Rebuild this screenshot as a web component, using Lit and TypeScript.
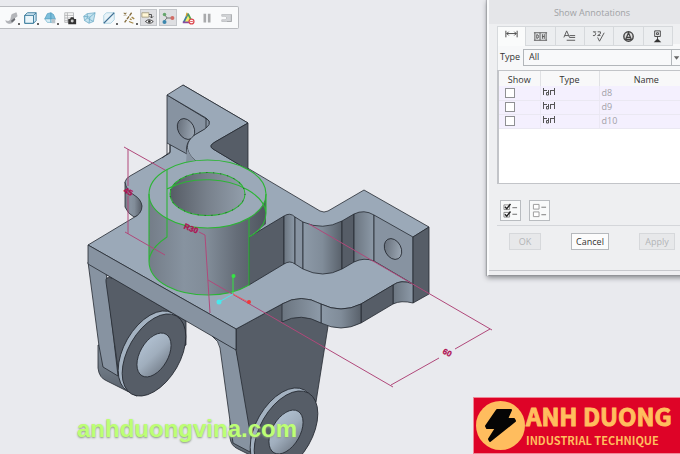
import { LitElement, html, css, svg } from "lit";
import { customElement, property, state } from "lit/decorators.js";
import { classMap } from "lit/directives/class-map.js";

const toolIcons = [
  { name: "Shading", more: true, art: svg`<path d="M2 11c3 2 6 0 6-3l1-4 5-2 1 4-3 2c0 5-5 8-9 5z" fill="#b4b6ba" stroke="#a6a8ac" stroke-width=".7"/><path d="M8 11l4-3 1 2-4 3z" fill="#696b70"/>` },
  { name: "Display style", more: true, art: svg`<path d="M2 5l3-3h10v9l-3 3H2z" fill="#cfe6f2" stroke="#2e7396"/><path d="M2 5h10v9H2zM12 5l3-3" fill="#eaf5fa" stroke="#2e7396"/>` },
  { name: "Saved orientations", more: true, art: svg`<path d="M2 9l3-6 4-1 3 2 2 5z" fill="#7dbedb" stroke="#4c9bbd" stroke-width=".8"/><path d="M2 9h12l-2 4H5z" fill="#d9eef6" stroke="#6fb2cd" stroke-width=".8"/><path d="M9 2v11" stroke="#4c9bbd"/><path d="M10 9h4v5h-4z" fill="#b9c3c9"/>` },
  { name: "View manager", more: false, art: svg`<path d="M2 2h10v11H2zM2 5h10M2 8h10M2 11h6M5 2v11" fill="#fafafa" stroke="#a3a5a8" stroke-width=".8"/><path d="M6 9h2l1-2h3l1 2h2v6H6z" fill="#333"/><circle cx="10.500" cy="11.500" r="1.700" fill="#ccc"/>` },
  { name: "Perspective", more: false, art: svg`<path d="M2 6l4-3 9-1-2 10-5 2-5-3z" fill="#c5e3ef" stroke="#64a6c3" stroke-width=".8"/><path d="M2 6l7 1 6-5M9 7l-1 7M6 3v5l7 4M6 8l-3 3" fill="none" stroke="#64a6c3" stroke-width=".8"/>` },
  { name: "Sections", more: true, art: svg`<path d="M2 5l3-3h9v8l-4 4H2z" fill="#e8f3f8" stroke="#a9d0e0"/><path d="M2 14L14 2" stroke="#3f6f94" stroke-width="1.300"/>` },
  { name: "Datum display", more: true, art: svg`<path d="M2 2l3 3M5 2L2 5" stroke="#826a39" stroke-width="1.200"/><path d="M11 2L3 13" stroke="#826a39" stroke-width="1.500" stroke-dasharray="4 1"/><path d="M9 9l2 1M8 12l5 2M11 7l3 2" stroke="#a38746" stroke-width="1.500"/>` },
  { name: "Annotation display", on: true, more: false, art: svg`<path d="M1 2h8v5H1z" fill="#fff6d5" stroke="#a59d80"/><path d="M9 4h3v4M10 6l2 2 2-2" fill="none" stroke="#444"/><path d="M5 12q4-4 9 0q-4 4-9 0z" fill="#fff" stroke="#333"/><circle cx="9.500" cy="12" r="1.500" fill="#333"/>` },
  { name: "Spin center", on: true, more: false, art: svg`<path d="M4 4l3 4h7M7 8l-4 4" fill="none" stroke="#666"/><circle cx="4" cy="4" r="2" fill="#66a66d"/><circle cx="13" cy="8" r="2.300" fill="#d16c65"/><circle cx="4" cy="12.500" r="2.300" fill="#3b86ad"/>` },
  { name: "Simulation", more: false, art: svg`<path d="M8 3l5 10H3z" fill="#f4ef68"/><path d="M8 3l5 10" stroke="#4fa548" stroke-width="2"/><path d="M8 3L3 13" stroke="#3f7f9c" stroke-width="2"/><path d="M7 2L6 6" stroke="#d7a32e" stroke-width="1.500"/><path d="M2 13h8" stroke="#8a4aa0" stroke-width="2"/><circle cx="12" cy="12" r="2.800" fill="#fff" stroke="#dd4d54" stroke-width="1.500"/><path d="M10.500 12h3" stroke="#dd4d54"/>` },
  { name: "Pause", more: false, art: svg`<path d="M4 3h3v10H4zM9 3h3v10H9z" fill="#a9aaac"/>` },
  { name: "Exit", more: false, art: svg`<path d="M2 4h11v8H2v-2h4l2-2-2-2H2z" fill="#d2d4d7" stroke="#bfc1c4"/><path d="M13 4v8H8" stroke="#a5a7aa" fill="none"/>` },
];

const tabIcons = [
  { name: "Dimensions", art: svg`<path d="M2 4v7M14 4v7M3 7h10M5 5L3 7l2 2M11 5l2 2-2 2" fill="none" stroke="#444"/>` },
  { name: "Geometric tolerances", art: svg`<path d="M1 4h14M1 12h14M2 4v8M14 4v8M7.500 4v8M10 5.500v5M12 5.500v5M10 8h2M4 6q2 0 2 2t-2 2z" fill="none" stroke="#555"/>` },
  { name: "Notes", art: svg`<path d="M2 9L5 2l3 7M3 7h4M8 7h6M8 9h6M5 12h9" fill="none" stroke="#555"/>` },
  { name: "Surface finish", art: svg`<path d="M1 3h3L3 4l1 1-1 2H1M6 3h3v2L6 7h3M6 9l2 4 5-9" fill="none" stroke="#555"/>` },
  { name: "Symbols", art: svg`<circle cx="8" cy="8" r="5" fill="#ddd" stroke="#444" stroke-width="1.500"/><path d="M5 11l3-7 3 7zM6 9h4" fill="none" stroke="#444" stroke-width="1.300"/>` },
  { name: "Datums", art: svg`<path d="M5 2h6v6H5zM8 8v4M7 4h2v2H7z" fill="none" stroke="#444"/><path d="M4 14l4-4 4 4z" fill="#333"/>` },
];

@customElement("tool-bar")
export class ToolBar extends LitElement {
  static styles = css`
    :host { display: block; }
    .bar { display: grid; grid-template-columns: repeat(12, 1fr); box-sizing: border-box; height: 23px; padding: 2px 1px; background: #f9fafb; border: 1px solid #b9bbbf; border-left: 0; border-radius: 0 2px 2px 0; }
    .tool { position: relative; display: flex; align-items: center; justify-content: center; margin: 0 1px; padding: 0; background: none; border: 1px solid transparent; }
    .on { background: #dedfe2; border-color: #c3c6ca; }
    .art { width: 14px; height: 14px; flex: none; }
    .more { position: absolute; right: -1px; bottom: 0; border: 1px solid #666; }
  `;
  render() {
    return html`<div class="bar" role="toolbar" aria-label="Graphics">${toolIcons.map(
      (t) => html`<button class=${classMap({ tool: true, on: !!t.on })} aria-label=${t.name}>
        <svg class="art" viewBox="0 0 16 16" aria-hidden="true">${t.art}</svg>${t.more ? html`<span class="more"></span>` : ""}
      </button>`
    )}</div>`;
  }
}

@customElement("annotation-dialog")
export class AnnotationDialog extends LitElement {
  @property({ attribute: false }) rows = ["d8", "d9", "d10"];
  @state() tab = 0;

  static styles = css`
    :host { display: block; font: 9px/12px "Open Sans", "Noto Sans", sans-serif; color: #333; }
    * { box-sizing: border-box; }
    .frame { background: #eeeff1; border: 1px solid #b8babe; border-left: 2px solid #fafbfc; border-top: 0; border-bottom-color: #929498; box-shadow: 0 2px 5px #8c8e92, -1px 0 1px #b5b7bb; padding-bottom: 4px; }
    .inside { border-bottom: 1px solid #c6c8cc; padding-bottom: 20px; }
    .title { margin: 0; height: 24px; padding-top: 7px; font-size: 9px; line-height: 12px; font-weight: 400; text-align: center; color: #a0a2a5; background: #e5e6e9; }
    .body { padding: 2px 8px 0; }
    .tabs { display: grid; grid-template-columns: repeat(6, 1fr); height: 18px; padding-right: 14px; }
    .tab { display: flex; justify-content: center; align-items: center; background: #eceef0; border: 1px solid #d6d9dc; border-left: 0; padding: 0; }
    .tab.on { height: 20px; padding-bottom: 4px; background: #fafbfb; border-left: 1px solid #d6d9dc; border-bottom: 0; }
    .art { width: 15px; height: 15px; flex: none; }
    .filter { display: flex; align-items: center; gap: 3px; height: 26px; padding: 0 4px 0 2px; background: #f7f8f9; border-left: 1px solid #d6d9dc; }
    .pick { position: relative; flex: 1; }
    .select { appearance: none; width: 100%; height: 17px; padding: 0 5px; border: 1px solid #b2b6ba; border-radius: 0; background: #f8f9fa; font: inherit; color: #333; display: block; }
    .arrow { position: absolute; right: 0; top: 0; width: 12px; height: 17px; border-left: 1px solid #b2b6ba; pointer-events: none; }
    .list { height: 114px; border: 1px solid #c2c4c8; border-left-width: 2px; background: #fff; }
    .table { width: 100%; border-collapse: collapse; table-layout: fixed; }
    .table th { height: 15px; padding: 2px 0 0; line-height: 12px; font-weight: 400; background: #f8f8f9; border-right: 1px solid #e0e1e4; }
    .table td { height: 14px; padding: 0; line-height: 12px; background: #f4f0fe; border-bottom: 1px solid #eae8f2; border-right: 1px solid #ebe8f4; }
    .c1 { width: 41px; }
    .c2 { width: 59px; }
    .table td.name { padding-left: 2px; color: #a2a1a8; }
    .table th.name { padding-left: 8px; }
    .box { appearance: none; display: block; width: 10px; height: 10px; margin: 0 0 0 6px; border: 1px solid #8f9093; background: #fff; }
    .box:checked { background: #777; }
    .dim { display: block; width: 14px; height: 12px; margin-left: 1px; }
    .picks { display: flex; gap: 8px; padding: 16px 0 4px 3px; }
    .mark { width: 21px; height: 21px; padding: 0; border: 1px solid #b9bcc0; background: #f9fafa; display: flex; align-items: center; justify-content: center; }
    .actions { display: flex; justify-content: space-between; border-top: 1px solid #d4d6da; padding: 7px 12px 0; }
    .act { height: 17px; padding: 0; font: inherit; line-height: 12px; color: #333; background: #fcfcfc; border: 1px solid #b6b9bd; }
    .act:disabled { color: #b2b4b7; background: #e7e8ea; border-color: #d6d8db; }
    .ok { width: 32px; }
    .cancel { width: 38px; }
    .apply { width: 36px; }
  `;

  render() {
    return html`<section class="frame" role="dialog" aria-labelledby="t"><div class="inside">
      <h1 class="title" id="t">Show Annotations</h1>
      <div class="body">
        <div class="tabs" role="tablist">${tabIcons.map(
          (t, i) => html`<button role="tab" class=${classMap({ tab: true, on: i === this.tab })} aria-selected=${i === this.tab} aria-label=${t.name} @click=${() => (this.tab = i)}>
            <svg class="art" viewBox="0 0 16 16" aria-hidden="true">${t.art}</svg></button>`
        )}</div>
        <div class="filter"><label for="type">Type</label>
          <div class="pick"><select class="select" id="type"><option>All</option></select>
            <svg class="arrow" viewBox="0 0 12 17" aria-hidden="true"><path d="M2 7h6l-3 4z" fill="#666"/></svg></div>
        </div>
        <div class="list"><table class="table">
          <thead><tr><th class="c1">Show</th><th class="c2">Type</th><th class="name">Name</th></tr></thead>
          <tbody>${this.rows.map((r) => html`<tr>
            <td><input class="box" type="checkbox" aria-label="Show ${r}" /></td>
            <td><svg class="dim" viewBox="0 0 14 12" role="img" aria-label="Dimension"><path d="M1.500 1v7M12.500 1v7M2 3.500h3M9 3.500h3M6.500 3v5H4.500V5.500h2M8.500 3v5" fill="none" stroke="#555"/></svg></td>
            <td class="name">${r}</td></tr>`)}</tbody>
        </table></div>
        <div class="picks">
          <button class="mark" aria-label="Select all"><svg class="art" viewBox="0 0 16 16"><path d="M1 2h6v5H1zM1 10h6v5H1z" fill="#fff" stroke="#888"/><path d="M2 4l2 2 4-5M2 12l2 2 4-5" fill="none" stroke="#222" stroke-width="1.500"/><path d="M10 5h5M10 12h5" stroke="#666"/></svg></button>
          <button class="mark" aria-label="Clear all"><svg class="art" viewBox="0 0 16 16"><path d="M1.500 1.500h6v5h-6zM1.500 9.500h6v5h-6z" fill="#fff" stroke="#999"/><path d="M10 4.500h5M10 12.500h5" stroke="#777"/></svg></button>
        </div>
        <div class="actions">
          <button class="act ok" disabled>OK</button><button class="act cancel">Cancel</button><button class="act apply" disabled>Apply</button>
        </div>
      </div>
    </div></section>`;
  }
}

@customElement("model-view")
export class ModelView extends LitElement {
  static styles = css`
    :host { display: block; }
    .scene { display: block; width: 100%; height: 100%; }
    .top { fill: #9ba9b8; }
    .face { fill: #8793a1; }
    .dark { fill: #565d67; }
    .edge { fill: none; }
    .ink { stroke: #252a31; stroke-width: 0.8; stroke-linejoin: round; }
    .plain { stroke: none; }
    .green { fill: none; stroke: #2cb535; stroke-width: 1.1; }
    .dots { stroke: #27402c; stroke-width: 1; stroke-dasharray: 1 6; }
    .dimension { fill: none; stroke: #b0487a; stroke-width: 1; }
    .label { font: bold 8px "Liberation Sans", sans-serif; fill: #b01052; stroke: #b01052; stroke-width: 0.3; text-anchor: middle; }
  `;

  lug(x: number, y: number) {
    return svg`<g transform="translate(${x} ${y})">
      <ellipse cx="-4" cy="-3" rx="26" ry="45" transform="rotate(30 -4 -3)" fill="#a4b2c1"/>
      <ellipse rx="26" ry="45" transform="rotate(30)" class="dark"/>
      <ellipse rx="14" ry="24" transform="rotate(30)" fill="url(#bore)"/>
    </g>`;
  }

  render() {
    return html`<svg class="scene" viewBox="0 0 680 454" preserveAspectRatio="xMinYMin slice" role="img" aria-label="Bracket model with dimensions">
      <defs>
        <linearGradient id="cyl"><stop offset="0" stop-color="#747d88"/><stop offset=".3" stop-color="#8793a0"/><stop offset=".5" stop-color="#818c98"/><stop offset=".75" stop-color="#656d78"/><stop offset="1" stop-color="#4f565f"/></linearGradient>
        <linearGradient id="ring"><stop offset="0" stop-color="#565c65"/><stop offset=".5" stop-color="#78818c"/><stop offset="1" stop-color="#929eab"/></linearGradient>
        <linearGradient id="bore" x2="1" y2=".5"><stop offset="0" stop-color="#b4c4d5"/><stop offset=".6" stop-color="#a0aebd"/><stop offset="1" stop-color="#808b98"/></linearGradient>
        <linearGradient id="lit"><stop offset="0" stop-color="#8d9aa8"/><stop offset=".5" stop-color="#808c99"/><stop offset="1" stop-color="#59616b"/></linearGradient>
        <linearGradient id="rise"><stop offset="0" stop-color="#6b7580"/><stop offset="1" stop-color="#8d9aa8"/></linearGradient>
        <linearGradient id="pin" x2="1" y2="1"><stop offset="0" stop-color="#5d6570"/><stop offset="1" stop-color="#a7b3c0"/></linearGradient>
        <linearGradient id="foot" y2="1" x2="0"><stop offset="0" stop-color="#84909d"/><stop offset="1" stop-color="#565e68"/></linearGradient>
      </defs>
      <g class="ink">
        <path fill="url(#foot)" d="M98 345V368Q99 378 107 381L137 396L150 350z"/>
        <path class="face" d="M88 262L99 346L103 367L118 376L106 272z"/>
        <path class="dark" d="M106 274L186 321V345L119 376L106 282Q105 276 112 278z"/>
        ${this.lug(154, 355)}
        <path fill="url(#foot)" d="M230 420V438Q231 446 238 449L260 460L270 420z"/>
        <path class="face" d="M212 336Q219 341 220 348L233 443L250 452L253 430L236 349z"/>
        <path class="dark" d="M236 329L282 304L329 320L316 402L252 444L236 350z"/>
        ${this.lug(286, 432)}
        <path fill="url(#cyl)" d="M125 182V207Q128 214 134 217L142 214L144 203L134 192z"/>
        <path class="top" d="M88 245L133 218Q142 214 142 206Q141 199 134 195Q126 190 125 182Q126 178 130 176L170 153V100L183 85L248 123L212 147L320 211Q324 213 328 211L364 190L429 227L413 237V284Q401 279 393 285L361 304Q341 314 321 304Q301 293 282 304L236 329z"/>
        <path class="face" d="M88 245V264L236 350V329z"/>
        <path class="face" d="M167 95L205 118Q213 122 208 127Q205 130 200 132C188 138 185 146 187 154L167 143z"/>
        <ellipse cx="186" cy="129" rx="8" ry="11" transform="rotate(-28 186 129)" fill="url(#pin)"/>
        <path class="top" d="M167 95L183 85L248 123L215 142Q208 146 213 149L250 171L210 180L195 160C184 151 185 140 198 133Q216 124 206 118z"/>
        <path class="edge" d="M206 118V128M167 143V155M170 145V152L162 158"/>
        <path class="face plain" d="M187 148Q189 155 195 160L186 163z"/>
        <path class="dark" d="M248 123L215 142Q208 146 213 149L248 170z"/>
        <path class="dark" d="M249 237L284 216V264L249 285z"/>
        <path fill="url(#rise)" d="M284 216Q290 212 295 217V264Q290 260 284 264z"/>
        <path class="face" d="M295 217L303 222V269L295 264z"/>
        <path fill="url(#lit)" d="M303 222Q323 231 342 221V269Q323 279 303 269z"/>
        <path class="dark" d="M342 221L354 214V262L342 269z"/>
        <path fill="url(#rise)" d="M354 214Q364 209 374 215V261Q364 257 354 262z"/>
        <path class="face" d="M374 215L413 237V284L374 261z"/>
        <path class="dark" d="M413 237L429 227V294L413 303z"/>
        <ellipse cx="393" cy="249" rx="8" ry="11" transform="rotate(-28 393 249)" fill="url(#pin)"/>
        <path fill="url(#rise)" d="M393 285Q401 279 413 284V303Q401 300 393 304z"/>
        <path class="dark" d="M361 304L393 285V304L361 323z"/>
        <path fill="url(#lit)" d="M321 304Q341 314 361 304V323Q341 333 321 323z"/>
        <path fill="url(#rise)" d="M282 304Q301 293 321 304V323Q301 312 282 322z"/>
        <path class="plain" fill="url(#cyl)" d="M149 194V261C149 283 178 295 208 295Q232 295 249 285V237L266 224V194z"/>
        <ellipse class="top plain" cx="207.500" cy="194" rx="58.500" ry="34"/>
        <ellipse class="plain" cx="207.500" cy="194" rx="37.500" ry="21.500" fill="url(#ring)"/>
      </g>
      <g class="green">
        <ellipse cx="207.500" cy="194" rx="58.500" ry="34"/>
        <ellipse cx="207.500" cy="194" rx="37.500" ry="21.500"/>
        <path d="M149 194V261C149 283 178 295 208 295Q232 295 249 285V218M266 194V213Q266 228 249 237M167 170V237Q150 248 149 261M167 189C193 175 228 178 248 190Q265 200 266 213"/>
        <ellipse class="dots" cx="207.500" cy="194" rx="37.500" ry="21.500"/>
      </g>
      <g class="dimension">
        <path d="M124 147L165 170M128 149V186M128 196V234M125 232L165 255M199 232L205 235L210 313M208 280L393 387M309 224L492 330M391 385L439 358M455 349L490 329"/>
        <text class="label" transform="translate(127 194) rotate(28)">45</text>
        <text class="label" transform="translate(190 231) rotate(22)">R30</text>
        <text class="label" transform="translate(446 355) rotate(28)">60</text>
      </g>
      <path d="M233 277V294" stroke="#35e543"/><path d="M233 294L219 302" stroke="#48e8ec"/><path d="M233 294L248 302" stroke="#ee5b61"/>
      <circle cx="233.500" cy="276" r="2" fill="#35e543"/><circle cx="219" cy="302" r="2.500" fill="#48e8ec"/><circle cx="249" cy="302" r="2" fill="#f13838"/>
    </svg>`;
  }
}

@customElement("app-root")
export class AppRoot extends LitElement {
  static styles = css`
    :host { display: block; position: relative; min-height: 100vh; overflow: hidden; background: #e9eaee; }
    .model { position: absolute; inset: 0; }
    .tools { position: relative; width: 239px; padding-top: 6px; }
    .dialog { position: absolute; top: 0; right: -16px; width: 209px; }
    .water { position: absolute; left: 77px; bottom: 12px; margin: 0; font: bold 24px/26px "Liberation Sans", sans-serif; color: #bdff74; text-shadow: 0 1px 2px #8b9a81; }
    .brand { position: absolute; right: 0; bottom: 0; display: flex; align-items: center; gap: 1px; box-sizing: border-box; width: 207px; height: 57px; padding-left: 2px; background: #de0327; border: 1px solid #ef8797; border-right: 0; color: #ffbd5e; font-family: "Noto Sans CJK SC", sans-serif; font-weight: 700; white-space: nowrap; }
    .bolt { width: 49px; height: 49px; flex: none; }
    .big { display: block; font-size: 24px; line-height: 29px; -webkit-text-stroke: 1px #ffbd5e; }
    .small { display: block; font-size: 11px; line-height: 20px; }
  `;
  render() {
    return html`<model-view class="model"></model-view>
      <tool-bar class="tools"></tool-bar>
      <p class="water">anhduongvina.com</p>
      <div class="brand"><svg class="bolt" viewBox="0 0 49 49" aria-hidden="true"><circle cx="24.500" cy="24.500" r="24.500" fill="#ffbd5e"/><path d="M21 9H35L31 18H38L39 20L14 40L13 38L20 27H11L10 25z" fill="#050505" stroke="#050505" stroke-width="2" stroke-linejoin="round"/></svg>
        <div><span class="big">ANH DUONG</span><span class="small">INDUSTRIAL TECHNIQUE</span></div></div>
      <annotation-dialog class="dialog"></annotation-dialog>`;
  }
}
